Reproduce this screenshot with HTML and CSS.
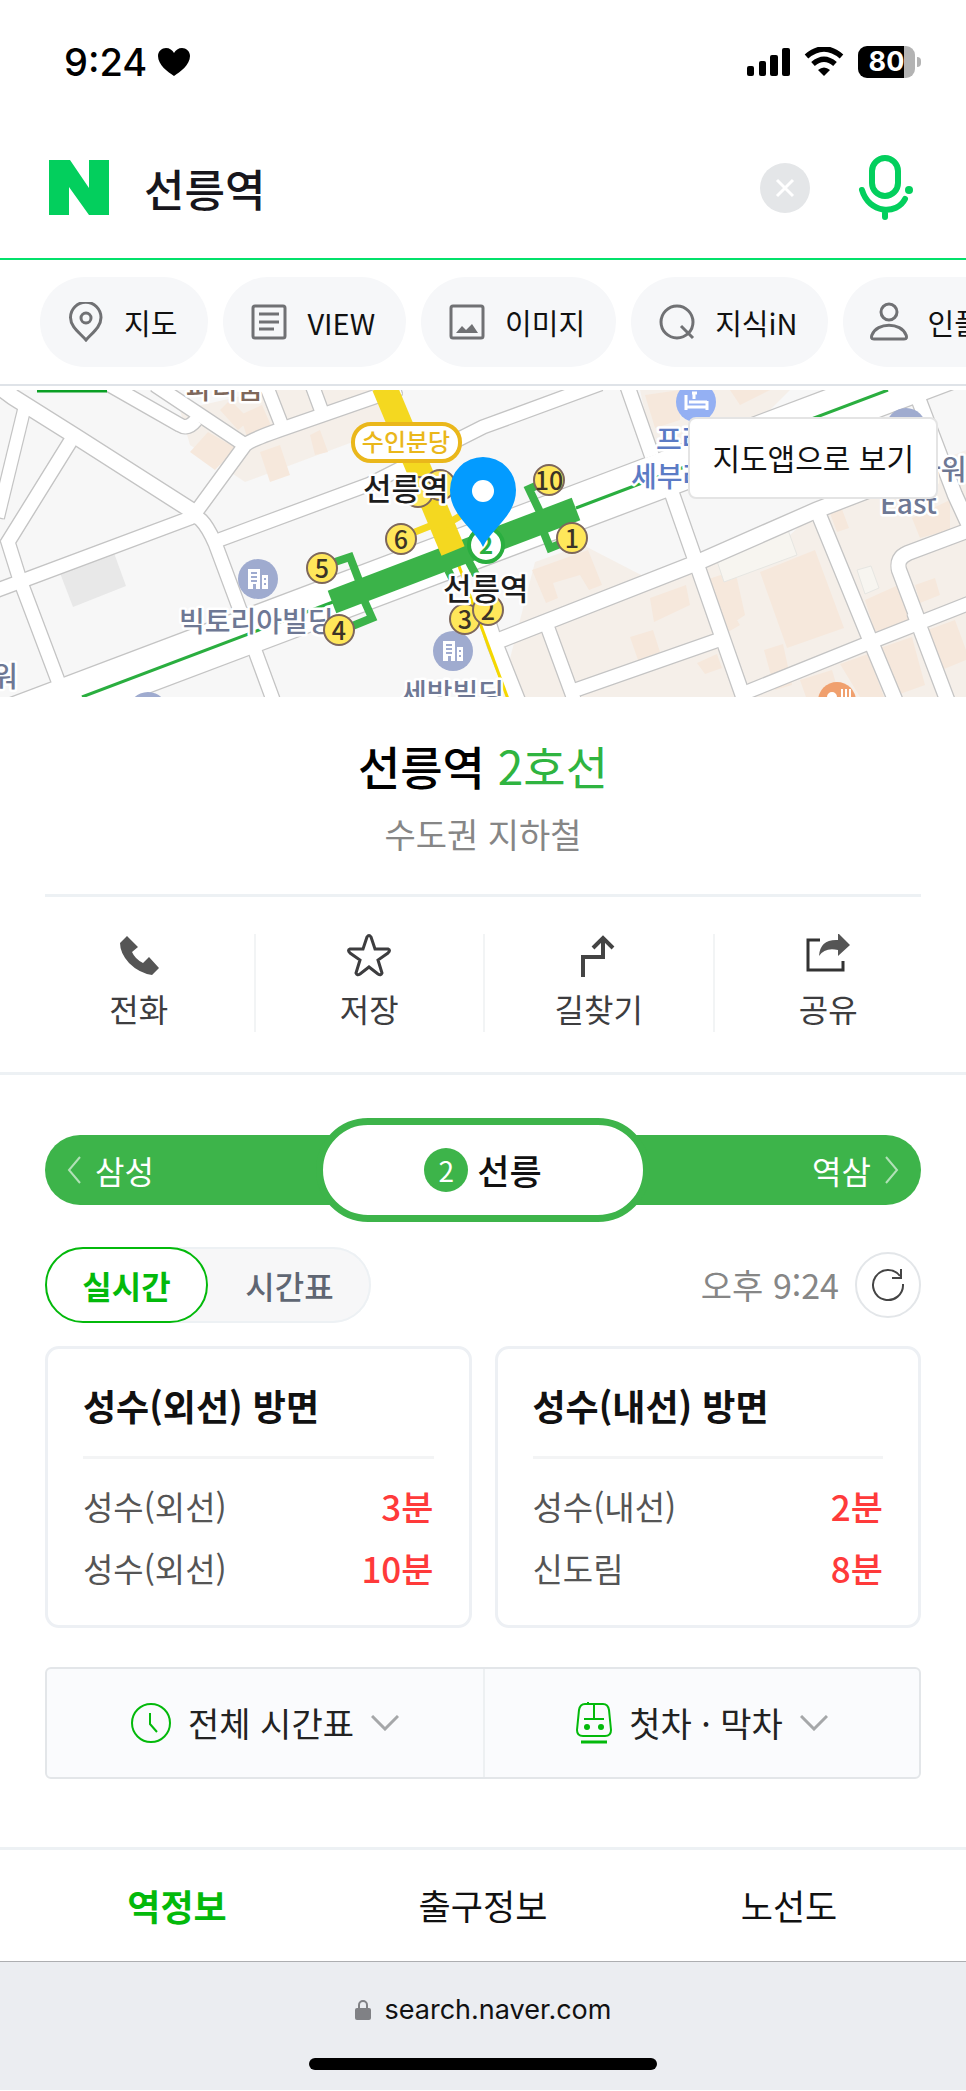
FILE: index.html
```html
<!DOCTYPE html>
<html lang="ko">
<head>
  <meta charset="utf-8">
  <meta name="viewport" content="width=device-width, initial-scale=1">
  <title>선릉역 : 네이버 검색</title>
  <link rel="stylesheet" href="styles.css">
</head>
<body>
  <div class="status-bar">
    <div class="status-left">
      <span>9:24</span>
      <svg width="32" height="30" viewBox="0 0 32 30"><path d="M16 29C10 25 0 18 0 9C0 4 4 1 8 1C11.500 1 14.500 3 16 6C17.500 3 20.500 1 24 1C28 1 32 4 32 9C32 18 22 25 16 29Z"/></svg>
    </div>
    <div class="status-right">
      <svg width="43" height="30" viewBox="0 0 43 30"><rect x="0" y="19" width="7" height="10" rx="2"/><rect x="12" y="14" width="7" height="15" rx="2"/><rect x="23" y="8" width="8" height="21" rx="2"/><rect x="35" y="1" width="8" height="28" rx="2"/></svg>
      <svg width="40" height="30" viewBox="0 0 40 30"><path d="M20 29L14 23Q20 18 26 23Z"/><path d="M2.500 9.500Q20 -5.500 37.500 9.500M9 17Q20 7.500 31 17" fill="none" stroke="#000" stroke-width="5.500"/></svg>
      <div class="battery"><span>80</span></div>
    </div>
  </div>

  <form class="search">
    <a href="#" class="logo" aria-label="NAVER">
      <svg width="60" height="55" viewBox="0 0 60 55"><path d="M0 0H21L40 28V0H60V55H40L20 27V55H0Z" fill="#03cf5d"/></svg>
    </a>
    <input type="text" class="search-input" value="선릉역" aria-label="검색어">
    <button type="button" class="clear-button" aria-label="지우기">
      <svg width="20" height="20" viewBox="0 0 20 20"><path d="M2 2L18 18M18 2L2 18" fill="none" stroke="#fff" stroke-width="3"/></svg>
    </button>
    <button type="button" class="mic-button" aria-label="음성검색">
      <svg width="56" height="66" viewBox="0 0 56 66"><g fill="none" stroke="#03cf5d" stroke-width="6" stroke-linecap="round"><rect x="14" y="3" width="26" height="38" rx="13"/><path d="M4 35C11 59 39 60 47 44M27 55V62"/></g><circle cx="51" cy="35" r="4" fill="#03cf5d"/></svg>
    </button>
  </form>

  <nav class="chips">
    <a href="#">
      <svg class="icon" viewBox="0 0 40 40"><path d="M20 38C14 31 4.500 25 4.500 15.500A15 15 0 0 1 35 15.500C35 25 26 31 20 38Z"/><circle cx="20" cy="16" r="5"/></svg>
      지도
    </a>
    <a href="#">
      <svg class="icon" viewBox="0 0 40 40"><rect x="4" y="4" width="32" height="32" rx="2"/><path d="M10 12H30M10 20H30M10 27H25"/></svg>
      VIEW
    </a>
    <a href="#">
      <svg class="icon" viewBox="0 0 40 40"><rect x="4" y="4" width="32" height="32" rx="2"/><path class="solid" d="M9 31L15 24L19 28L25 22L31 31Z"/></svg>
      이미지
    </a>
    <a href="#">
      <svg class="icon" viewBox="0 0 40 40"><circle cx="20" cy="20" r="16"/><path d="M24 24L36 36"/></svg>
      지식iN
    </a>
    <a href="#">
      <svg class="icon" viewBox="0 0 40 40"><circle cx="20" cy="10" r="8"/><path d="M5 37C2 37 2 35 3 33C8 20 32 20 37 33C38 35 38 37 35 37Z"/></svg>
      인플루언서
    </a>
  </nav>

  <div class="map">
    <svg class="map-canvas" viewBox="0 0 966 307">
      <defs>
        <filter id="outline" filterUnits="userSpaceOnUse" x="-20" y="-20" width="1010" height="350">
          <feMorphology operator="dilate" radius="1"/>
        </filter>
        <g id="roads">
          <path stroke-width="15" d="M-10 -10L13 7L75 46L194 122"/>
          <path stroke-width="12" d="M25 16L-2 127"/>
          <path stroke-width="13" d="M75 44L8 152L20 190L66 312"/>
          <path stroke-width="13" d="M-5 201L190 128Q200 120 215 153L237 212L275 315"/>
          <path stroke-width="13" d="M196 122L245 55Q250 50 285 38L400 -2"/>
          <path stroke-width="13" d="M245 55L155 -5M108 -6L180 35Q188 40 196 30M282 36L266 -5M322 22L312 -5"/>
          <path stroke-width="13" d="M211 153L370 94L483 37L600 -6"/>
          <path stroke-width="44" d="M-60 358L1010 -46"/>
          <path stroke-width="14" d="M627 -5L652 66M669 95L696 172L745 312"/>
          <path stroke-width="15" d="M484 220L495 254L518 312M495 252L696 173L817 120L900 88"/>
          <path stroke-width="13" d="M546 233L575 312M570 302L724 248M737 306L871 252L980 209"/>
          <path stroke-width="14" d="M817 120L871 252L896 312M915 0L955 105L972 142"/>
          <path stroke-width="14" d="M918 230L899 180Q896 168 908 163L980 136M914 222L948 312"/>
        </g>
        <g id="building">
          <circle r="20" fill="#9fabcf"/>
          <path d="M-10 -10H2V10H-2V5H-5V10H-10ZM4 -4H10V10H4Z" fill="#fff"/>
          <path d="M-7 -6H-1M-7 -2H-1M-7 2H-1M6 0H8M6 5H8" stroke="#9fabcf" stroke-width="2"/>
        </g>
      </defs>

      <rect width="966" height="307" fill="#f7f7f7"/>
      <g fill="#f5efe9">
        <path d="M640 0H790L720 70L655 70Z"/>
        <path d="M500 307L535 172L583 155L645 187L790 145L817 120L966 60V307Z"/>
        <path d="M180 20L290 -5H400L385 40L245 92L190 55Z"/>
      </g>
      <g fill="#f6e8dc">
        <path d="M208 42L236 58L215 80L190 62ZM240 25L262 15L273 40L248 50ZM260 62L280 55L290 85L270 92ZM310 45L320 40L328 62L315 65ZM220 20L230 10L250 30L238 40Z"/>
        <path d="M532 180L588 160L602 195L589 200L580 185L553 193L558 208L546 213Z"/>
        <path d="M650 208L686 195L690 215L654 232ZM706 190L735 180L745 225L730 235L728 215L740 235L728 242Z"/>
        <path d="M760 182L815 160L844 238L787 258ZM828 118L840 114L849 138L837 142ZM865 210L905 192L915 230L875 242Z"/>
        <path d="M630 247L653 240L660 262L638 270ZM697 273L717 264L722 278L705 284ZM764 260L783 254L792 295L775 300Z"/>
        <path d="M880 258L912 247L925 295L900 304ZM922 242L955 230L966 260V270L932 284ZM912 128L950 110V140L920 148ZM800 290L832 280L840 307H806ZM840 274L868 264L884 307H860ZM915 195L935 188L940 205L920 213ZM645 5L680 0L680 30L655 38ZM730 0H770L740 15Z"/>
      </g>
      <path d="M60 183L114 163L126 196L73 217Z" fill="#e8e8e8"/>
      <path d="M715 165L788 140L797 165L724 192ZM857 180L871 176L879 198L865 204Z" fill="#f7f5f0" stroke="#e6e6e2"/>

      <use href="#roads" class="road-edge" filter="url(#outline)"/>
      <use href="#roads" class="road"/>

      <path d="M82 307L333 212M576 118L888 0" stroke="#2aae3f" stroke-width="3"/>
      <path d="M37 1H107" stroke="#0a9f24" stroke-width="3"/>
      <path d="M456 168L508 309" stroke="#f5d800" stroke-width="3"/>
      <g fill="none" stroke="#3bb349" stroke-width="8">
        <path d="M332 173L350 167L360 193M364 210L372 228L350 237M540 122L529 99L547 91M544 143L550 158L565 152M468 170L476 185M448 180L452 188"/>
      </g>
      <path d="M332 212L576 119" stroke="#3bb349" stroke-width="24"/>
      <path d="M384 -4L453 161" stroke="#f4d820" stroke-width="25"/>
      <path d="M405 146L430 136M440 138L462 125" stroke="#f4d820" stroke-width="7"/>

      <use href="#building" x="258" y="189"/>
      <use href="#building" x="453" y="261"/>
      <use href="#building" x="148" y="322"/>
      <use href="#building" x="906" y="38"/>
      <circle cx="696" cy="12" r="20" fill="#94b0f3"/>
      <path d="M686 5V20M707 11V20M686 17H707M689 12H707M692 3H697M694 3V9" stroke="#fff" stroke-width="3"/>
      <circle cx="837" cy="311" r="19" fill="#f0a06e"/>
      <path d="M828 307a4 4 0 1 1 8 0M842 299V307M846 299V307M850 299V307" stroke="#fff" stroke-width="2" fill="#fff"/>

      <g class="poi">
        <text x="179" y="242">빅토리아빌딩</text>
        <text x="401" y="314">세방빌딩</text>
        <text x="-8" y="297">워</text>
        <text x="915" y="90">타워</text>
        <text x="880" y="124">East</text>
        <text x="186" y="9" class="brown">파티움</text>
        <text x="656" y="60" class="blue">프라</text>
        <text x="631" y="97" class="blue">세부라</text>
      </g>

      <g class="exit">
        <circle cx="440" cy="95" r="15"/><circle cx="418" cy="102" r="15"/>
        <circle cx="322" cy="178" r="15"/><text x="322" y="188">5</text>
        <circle cx="401" cy="149" r="15"/><text x="401" y="159">6</text>
        <circle cx="339" cy="240" r="15"/><text x="339" y="250">4</text>
        <circle cx="465" cy="229" r="15"/><text x="465" y="239">3</text>
        <circle cx="488" cy="220" r="15"/><text x="488" y="230">2</text>
        <circle cx="572" cy="148" r="15"/><text x="572" y="158">1</text>
        <circle cx="549" cy="90" r="15"/><text x="549" y="100">10</text>
      </g>

      <rect x="353" y="34" width="107" height="37" rx="18" fill="#fff" stroke="#eab71b" stroke-width="4"/>
      <text x="406" y="61" class="line-name">수인분당</text>
      <circle cx="486" cy="155" r="17" fill="#fff" stroke="#2aae3f" stroke-width="4"/>
      <text x="486" y="164" class="line-number">2</text>
      <text x="363" y="110" class="station">선릉역</text>
      <text x="443" y="210" class="station">선릉역</text>
      <path d="M483 157C475 139 450 126 450 100A33 33 0 0 1 516 100C516 126 491 139 483 157Z" fill="#039bff"/>
      <circle cx="483" cy="101" r="11" fill="#fff"/>
    </svg>
    <a href="#" class="map-link">지도앱으로 보기</a>
  </div>

  <header class="place">
    <h1>선릉역 <span>2호선</span></h1>
    <p>수도권 지하철</p>
  </header>

  <div class="actions">
    <button type="button">
      <svg width="44" height="44" viewBox="0 0 44 44"><path d="M3 9L10 2L21 13L15 18Q18 25 26 29L32 23L42 34L35 41Q22 39 12 29Q3 19 3 9Z" fill="#555"/></svg>
      전화
    </button>
    <button type="button">
      <svg width="44" height="44" viewBox="0 0 44 44"><path d="M20 3Q22 0 24 3L28 15H41Q44 16 41 19L31 26L35 39Q34 42 31 40L22 33L13 40Q10 42 9 39L13 26L3 19Q0 16 3 15H16Z" fill="none" stroke="#3d3d3f" stroke-width="3"/></svg>
      저장
    </button>
    <button type="button">
      <svg width="44" height="44" viewBox="0 0 44 44"><path d="M6 43V23H26V4M16 14L26 4L36 14" fill="none" stroke="#444" stroke-width="4"/></svg>
      길찾기
    </button>
    <button type="button">
      <svg width="44" height="44" viewBox="0 0 44 44"><path d="M14 6H2V36H37V27" fill="none" stroke="#333" stroke-width="3"/><path d="M13 22Q14 5 32 6V-1L44 11L32 22V16Q19 13 13 22Z" fill="#555"/></svg>
      공유
    </button>
  </div>

  <main class="station-info">
    <nav class="line-nav">
      <a href="#">
        <svg width="14" height="28" viewBox="0 0 14 28"><path d="M13 1L2 14L13 27"/></svg>
        삼성
      </a>
      <strong><span class="line-badge">2</span>선릉</strong>
      <a href="#" class="next">
        역삼
        <svg width="14" height="28" viewBox="0 0 14 28"><path d="M1 1L12 14L1 27"/></svg>
      </a>
    </nav>

    <div class="toolbar">
      <div class="toggle">
        <button type="button" class="active">실시간</button>
        <button type="button">시간표</button>
      </div>
      <div class="updated">
        <time>오후 9:24</time>
        <button type="button" class="refresh" aria-label="새로고침">
          <svg width="34" height="34" viewBox="0 0 34 34"><path d="M32 16A15 15 0 1 1 29 8M30 1V10H21" fill="none" stroke="#444" stroke-width="2"/></svg>
        </button>
      </div>
    </div>

    <div class="cards">
      <section class="card">
        <h2>성수(외선) 방면</h2>
        <table>
          <tr><td>성수(외선)</td><td class="minutes">3분</td></tr>
          <tr><td>성수(외선)</td><td class="minutes">10분</td></tr>
        </table>
      </section>
      <section class="card">
        <h2>성수(내선) 방면</h2>
        <table>
          <tr><td>성수(내선)</td><td class="minutes">2분</td></tr>
          <tr><td>신도림</td><td class="minutes">8분</td></tr>
        </table>
      </section>
    </div>

    <div class="more">
      <button type="button">
        <svg width="40" height="40" viewBox="0 0 40 40"><g fill="none" stroke="#03b90b" stroke-width="2"><circle cx="20" cy="20" r="19"/><path d="M19 10V21L26 29"/></g></svg>
        전체 시간표
        <svg width="28" height="16" viewBox="0 0 28 16"><path d="M1 1L14 14L27 1" fill="none" stroke="#a5a7a9" stroke-width="3"/></svg>
      </button>
      <button type="button">
        <svg width="36" height="42" viewBox="0 0 36 42"><path d="M9 2H27Q32 2 33 8L35 28Q35 34 29 34H7Q1 34 1 28L3 8Q4 2 9 2ZM8 17H28M18 2V17M12 0V2" fill="none" stroke="#03b90b" stroke-width="2"/><path d="M5 40H31" stroke="#03b90b" stroke-width="3"/><circle cx="11" cy="25" r="3" fill="#03b90b"/><circle cx="25" cy="25" r="3" fill="#03b90b"/></svg>
        첫차 · 막차
        <svg width="28" height="16" viewBox="0 0 28 16"><path d="M1 1L14 14L27 1" fill="none" stroke="#a5a7a9" stroke-width="3"/></svg>
      </button>
    </div>
  </main>

  <nav class="tabs">
    <a href="#" class="active">역정보</a>
    <a href="#">출구정보</a>
    <a href="#">노선도</a>
  </nav>

  <footer class="browser-bar">
    <div class="address">
      <svg width="16" height="22" viewBox="0 0 16 22"><rect y="9" width="16" height="12" rx="2" fill="#808185"/><path d="M4 10V6a4 4 0 0 1 8 0V10" fill="none" stroke="#808185" stroke-width="2"/></svg>
      search.naver.com
    </div>
    <div class="home-indicator"></div>
  </footer>
</body>
</html>
```

FILE: styles.css
```css
* {
  box-sizing: border-box;
}

body {
  margin: 0;
  background: #fff;
  color: #111;
  font-family: "Noto Sans CJK KR", sans-serif;
  font-size: 32px;
  line-height: 48px;
}

a {
  color: inherit;
  text-decoration: none;
}

button {
  padding: 0;
  border: none;
  background: none;
  color: inherit;
  font: inherit;
  cursor: pointer;
}

svg {
  display: block;
  flex-shrink: 0;
}

/* status bar */
.status-bar {
  display: flex;
  justify-content: space-between;
  align-items: center;
  height: 123px;
  padding: 0 46px 0 64px;
  color: #000;
  font-family: Inter, sans-serif;
}

.status-left {
  display: flex;
  align-items: center;
  gap: 11px;
  font-size: 38px;
  font-weight: 500;
}

.status-right {
  display: flex;
  align-items: center;
  gap: 14px;
}

.battery {
  position: relative;
  width: 57px;
  height: 32px;
  margin-right: 5px;
  border-radius: 9px;
  background: linear-gradient(to right, #000 80%, #b3b3b3 80%);
  color: #fff;
  font-size: 27px;
  font-weight: 700;
  line-height: 32px;
  text-align: center;
}

.battery::after {
  content: "";
  position: absolute;
  top: 11px;
  right: -6px;
  width: 4px;
  height: 10px;
  border-radius: 0 4px 4px 0;
  background: #b3b3b3;
}

/* search */
.search {
  display: flex;
  align-items: center;
  height: 137px;
  padding: 0 52px 6px 49px;
  border-bottom: 2px solid #03e16b;
}

.search-input {
  flex: 1;
  min-width: 0;
  height: 64px;
  margin-left: 35px;
  padding: 0;
  border: none;
  outline: none;
  background: none;
  color: #17161c;
  font: inherit;
  font-size: 44px;
  font-weight: 500;
}

.clear-button {
  display: flex;
  justify-content: center;
  align-items: center;
  width: 50px;
  height: 50px;
  margin-right: 48px;
  border-radius: 50%;
  background: #e4e6e8;
}

.chips {
  display: flex;
  gap: 15px;
  padding: 17px 0 17px 40px;
  border-bottom: 2px solid #dfe3e8;
  overflow: hidden;
}

.chips a {
  display: flex;
  align-items: center;
  flex-shrink: 0;
  gap: 18px;
  height: 90px;
  padding: 0 31px 0 26px;
  border-radius: 45px;
  background: #f6f7f9;
  font-size: 29px;
}

.icon {
  width: 40px;
  height: 40px;
  fill: none;
  stroke: #707174;
  stroke-width: 3;
}

.icon .solid {
  fill: #707174;
  stroke: none;
}

/* map */
.map {
  position: relative;
  margin-top: 4px;
}

.map-canvas {
  width: 100%;
  height: auto;
}

.road-edge {
  fill: none;
  stroke: #c4c4c4;
}

.road {
  fill: none;
  stroke: #fff;
}

.map text {
  paint-order: stroke;
  stroke: #fff;
  stroke-width: 5px;
  stroke-linejoin: round;
}

.poi {
  fill: #6e7894;
  font-size: 28px;
  font-weight: 500;
}

.poi .brown {
  fill: #7d675b;
}

.poi .blue {
  fill: #5b7bc5;
}

.exit circle {
  fill: #ffe75a;
  stroke: #7d675b;
  stroke-width: 2;
}

.map .exit text {
  fill: #3b3326;
  stroke: none;
  font-size: 25px;
  font-weight: 500;
  text-anchor: middle;
}

.line-name {
  fill: #eab71b;
  font-size: 24px;
  font-weight: 500;
  text-anchor: middle;
}

.line-number {
  fill: #2aae3f;
  font-size: 24px;
  font-weight: 700;
  text-anchor: middle;
}

.station {
  fill: #1c1c1c;
  font-size: 31px;
  font-weight: 500;
}

.map-link {
  position: absolute;
  top: 27px;
  right: 28px;
  padding: 14px 22px 16px;
  border: 2px solid #e4e4e4;
  border-radius: 8px;
  background: #fff;
  font-size: 30px;
}

/* place title */
.place {
  margin: 0 45px;
  padding: 36px 0;
  border-bottom: 3px solid #edf1f4;
  text-align: center;
}

.place h1 {
  margin: 0 0 13px;
  color: #000;
  font-size: 46px;
  font-weight: 500;
  line-height: 64px;
}

.place h1 span {
  color: #2fb440;
  font-weight: 400;
}

.place p {
  margin: 0;
  color: #868686;
  font-size: 34px;
}

.actions {
  display: grid;
  grid-template-columns: repeat(4, 1fr);
  padding: 37px 24px 40px;
  border-bottom: 3px solid #edf1f4;
  color: #3d3d3f;
}

.actions button {
  display: flex;
  flex-direction: column;
  align-items: center;
  gap: 6px;
}

.actions button + button {
  border-left: 2px solid #f2f4f5;
}

/* station */
.station-info {
  padding: 43px 45px 68px;
}

.line-nav {
  display: grid;
  grid-template-columns: 1fr 334px 1fr;
  align-items: center;
  margin-bottom: 25px;
}

.line-nav a {
  display: flex;
  align-items: center;
  gap: 14px;
  height: 70px;
  margin-right: -40px;
  padding: 0 22px;
  border-radius: 35px 0 0 35px;
  background: #3db44a;
  color: #fff;
}

.line-nav .next {
  justify-content: flex-end;
  margin: 0 0 0 -40px;
  border-radius: 0 35px 35px 0;
}

.line-nav path {
  fill: none;
  stroke: #b1e1b7;
  stroke-width: 2;
}

.line-nav strong {
  display: flex;
  justify-content: center;
  align-items: center;
  gap: 9px;
  z-index: 1;
  height: 104px;
  border: 7px solid #3db44a;
  border-radius: 52px;
  background: #fff;
  font-size: 35px;
  font-weight: 500;
}

.line-badge {
  width: 44px;
  height: 44px;
  border-radius: 50%;
  background: #3db44a;
  color: #fff;
  font-size: 28px;
  font-weight: 400;
  line-height: 44px;
  text-align: center;
}

.toolbar {
  display: flex;
  justify-content: space-between;
  align-items: center;
  margin-bottom: 23px;
}

.toggle {
  display: flex;
  border-radius: 38px;
  background: #f7f7f8;
  box-shadow: inset 0 0 0 2px #edf1f4;
  color: #5f6673;
  font-weight: 500;
}

.toggle button {
  width: 163px;
  height: 76px;
  border-radius: 38px;
}

.toggle .active {
  border: 2px solid #03b90b;
  background: #fff;
  color: #03b90b;
  font-weight: 700;
}

.updated {
  display: flex;
  align-items: center;
  gap: 16px;
  color: #868686;
  font-size: 34px;
}

.refresh {
  display: flex;
  justify-content: center;
  align-items: center;
  width: 66px;
  height: 66px;
  border: 2px solid #e3e6e9;
  border-radius: 50%;
}

.cards {
  display: grid;
  grid-template-columns: 1fr 1fr;
  gap: 23px;
  margin-bottom: 39px;
}

.card {
  padding: 32px 35px 26px;
  border: 3px solid #edf0f4;
  border-radius: 14px;
}

.card h2 {
  margin: 0 0 16px;
  padding-bottom: 27px;
  border-bottom: 3px solid #f3f4f5;
  font-size: 36px;
  font-weight: 700;
}

.card table {
  width: 100%;
  border-collapse: collapse;
}

.card td {
  height: 62px;
  padding: 0;
  color: #555;
  font-size: 33px;
}

.card .minutes {
  color: #ff3a3a;
  font-size: 35px;
  font-weight: 500;
  text-align: right;
}

.more {
  display: grid;
  grid-template-columns: 1fr 1fr;
  border: 2px solid #e3e6e9;
  border-radius: 6px;
  background: #fafbfd;
  color: #222;
  font-size: 34px;
}

.more button {
  display: flex;
  justify-content: center;
  align-items: center;
  gap: 17px;
  height: 108px;
}

.more button + button {
  border-left: 2px solid #edf0f2;
}

/* bottom tabs */
.tabs {
  display: grid;
  grid-template-columns: repeat(3, 1fr);
  padding: 0 24px;
  border-top: 3px solid #edf1f4;
  font-size: 35px;
  text-align: center;
}

.tabs a {
  padding: 31px 0 32px;
}

.tabs .active {
  color: #03b90b;
  font-size: 36px;
  font-weight: 700;
}

.browser-bar {
  padding: 24px 0 20px;
  border-top: 1px solid #adaeb1;
  background: #ebedf1;
  color: #111;
  font-family: Inter, sans-serif;
  font-size: 27px;
}

.address {
  display: flex;
  justify-content: center;
  align-items: center;
  gap: 14px;
}

.home-indicator {
  width: 36%;
  height: 12px;
  margin: 24px auto 0;
  border-radius: 6px;
  background: #000;
}
```
